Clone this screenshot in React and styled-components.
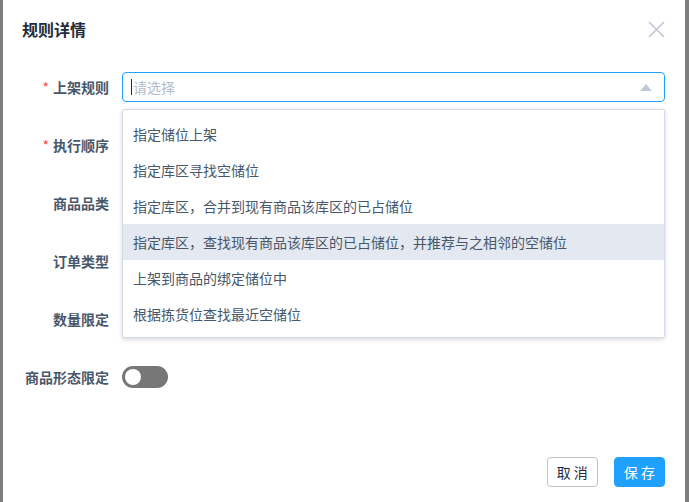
import React from 'react'
import styled, { createGlobalStyle } from 'styled-components';

const GlobalStyle = createGlobalStyle`
  html, body {
    margin: 0;
    padding: 0;
    background: #7d7d7d;
    font-family: "Noto Sans CJK SC", "Noto Sans", "Liberation Sans", sans-serif;
  }
`;

const fields = [
  { label: '上架规则', required: true, type: 'select' },
  { label: '执行顺序', required: true },
  { label: '商品品类' },
  { label: '订单类型' },
  { label: '数量限定' },
  { label: '商品形态限定', type: 'switch' },
];

const options = [
  '指定储位上架',
  '指定库区寻找空储位',
  '指定库区，合并到现有商品该库区的已占储位',
  '指定库区，查找现有商品该库区的已占储位，并推荐与之相邻的空储位',
  '上架到商品的绑定储位中',
  '根据拣货位查找最近空储位',
];

function App() {
  return (
    <>
      <GlobalStyle />
      <Dialog>
        <Header>
          <Title>规则详情</Title>
          <CloseBtn>
            <svg width="17" height="17" viewBox="0 0 17 17">
              <path d="M1 1 L16 16 M16 1 L1 16" stroke="#c0c8d6" strokeWidth="1.6" fill="none" />
            </svg>
          </CloseBtn>
        </Header>
        <Form>
          {fields.map((f) => (
            <Row key={f.label}>
              <Label>
                {f.required && <Star>*</Star>}
                {f.label}
              </Label>
              <Control>
                {f.type === 'select' && (
                  <Select>
                    <InputBox>
                      <Caret />
                      <Placeholder>请选择</Placeholder>
                      <Arrow />
                    </InputBox>
                    <Menu>
                      {options.map((o, i) => (
                        <Option key={o} $hover={i === 3}>{o}</Option>
                      ))}
                    </Menu>
                  </Select>
                )}
                {f.type === 'switch' && (
                  <Switch>
                    <Knob />
                  </Switch>
                )}
              </Control>
            </Row>
          ))}
        </Form>
        <Footer>
          <Button>取 消</Button>
          <Button $primary>保 存</Button>
        </Footer>
      </Dialog>
    </>
  )
}

const Dialog = styled.div`
  margin-left: 3px;
  width: 682px;
  height: 502px;
  background: #fff;
  display: flex;
  flex-direction: column;
  box-sizing: border-box;
`;

const Header = styled.div`
  display: flex;
  align-items: center;
  justify-content: space-between;
  padding: 18px 20px 0 19px;
  height: 22px;
  box-sizing: content-box;
`;

const Title = styled.div`
  font-size: 16px;
  font-weight: 700;
  color: #1f2d3d;
  line-height: 22px;
`;

const CloseBtn = styled.div`
  width: 17px;
  height: 17px;
  display: flex;
`;

const Form = styled.div`
  padding: 32px 20px 0 20px;
  display: flex;
  flex-direction: column;
  gap: 28px;
`;

const Row = styled.div`
  display: flex;
  align-items: center;
  height: 30px;
`;

const Label = styled.div`
  width: 99px;
  padding-right: 13px;
  box-sizing: border-box;
  text-align: right;
  font-size: 14px;
  font-weight: 700;
  color: #48576a;
  white-space: nowrap;
`;

const Star = styled.span`
  color: #ff4949;
  font-weight: 400;
  margin-right: 4px;
`;

const Control = styled.div`
  flex: 1;
  display: flex;
  align-items: center;
`;

const Select = styled.div`
  position: relative;
  flex: 1;
`;

const InputBox = styled.div`
  height: 30px;
  box-sizing: border-box;
  border: 1px solid #20a0ff;
  border-radius: 4px;
  display: flex;
  align-items: center;
  padding: 0 12px 0 8px;
`;

const Caret = styled.span`
  width: 1px;
  height: 16px;
  background: #1f2d3d;
`;

const Placeholder = styled.span`
  flex: 1;
  font-size: 14px;
  color: #b4bccc;
  margin-left: 1px;
`;

const Arrow = styled.span`
  width: 0;
  height: 0;
  border-left: 6px solid transparent;
  border-right: 6px solid transparent;
  border-bottom: 7px solid #bfcbd9;
`;

const Menu = styled.div`
  position: absolute;
  top: calc(100% + 7px);
  left: 0;
  right: 0;
  z-index: 5;
  background: #fff;
  border: 1px solid #d1dbe5;
  border-radius: 2px;
  box-shadow: 0 2px 4px rgba(0, 0, 0, 0.12), 0 0 6px rgba(0, 0, 0, 0.04);
  padding: 6px 0 5px;
`;

const Option = styled.div`
  height: 36px;
  line-height: 36px;
  padding: 0 10px;
  font-size: 14px;
  color: #48576a;
  background: ${(p) => (p.$hover ? '#e4e8f1' : '#fff')};
  white-space: nowrap;
`;

const Switch = styled.div`
  width: 46px;
  height: 22px;
  border-radius: 11px;
  background: #777;
  display: flex;
  align-items: center;
  padding-left: 3px;
  box-sizing: border-box;
`;

const Knob = styled.span`
  width: 16px;
  height: 16px;
  border-radius: 50%;
  background: #fff;
`;

const Footer = styled.div`
  margin-top: auto;
  display: flex;
  justify-content: flex-end;
  gap: 16px;
  padding: 0 20px 15px;
`;

const Button = styled.button`
  height: 30px;
  min-width: 51px;
  padding: 0 9px;
  border-radius: 4px;
  font-family: inherit;
  font-size: 14px;
  border: 1px solid ${(p) => (p.$primary ? '#20a0ff' : '#c4c4c4')};
  background: ${(p) => (p.$primary ? '#20a0ff' : '#fff')};
  color: ${(p) => (p.$primary ? '#fff' : '#1f2d3d')};
  white-space: pre;
`;

export default App;
